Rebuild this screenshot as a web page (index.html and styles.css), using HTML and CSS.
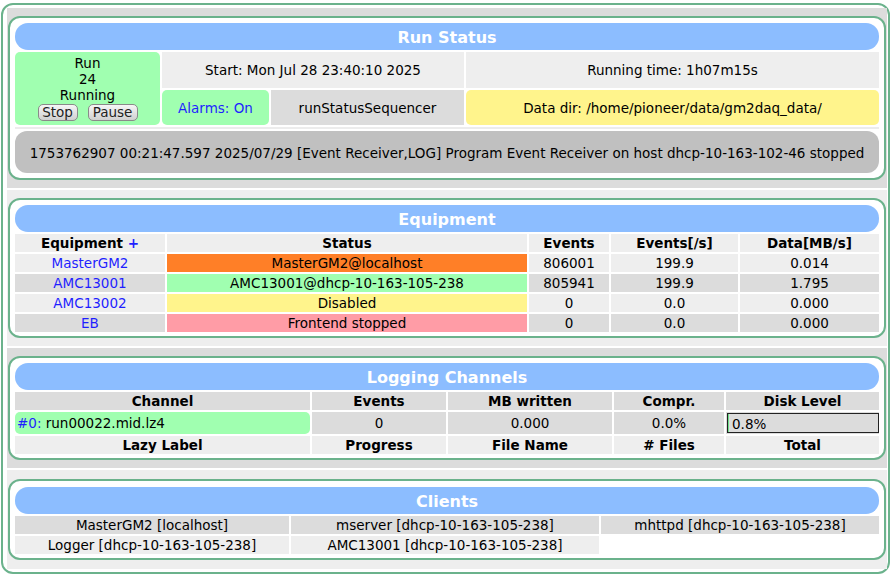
FILE: index.html
```html
<!DOCTYPE html>
<html>
<head>
<meta charset="utf-8">
<title>MIDAS Status</title>
<link rel="stylesheet" href="styles.css">
</head>
<body>
<div class="page">
  <div class="band dark">
    <div class="card card-run">
      <div class="card-head">Run Status</div>
      <div class="run-grid">
        <div class="cell green run-cell">
          <div>Run</div>
          <div>24</div>
          <div>Running</div>
          <div class="btns"><button class="btn">Stop</button><button class="btn">Pause</button></div>
        </div>
        <div class="cell light start">Start: Mon Jul 28 23:40:10 2025</div>
        <div class="cell light">Running time: 1h07m15s</div>
        <div class="cell green round link">Alarms: On</div>
        <div class="cell mid">runStatusSequencer</div>
        <div class="cell yellow round">Data dir: /home/pioneer/data/gm2daq_data/</div>
      </div>
      <div class="sep"></div>
      <div class="msg">1753762907 00:21:47.597 2025/07/29 [Event Receiver,LOG] Program Event Receiver on host dhcp-10-163-102-46 stopped</div>
    </div>
  </div>

  <div class="band light-band">
    <div class="card">
      <div class="card-head">Equipment</div>
      <div class="grid eq-grid">
        <div class="cell light bold"><span>Equipment <span class="link">+</span></span></div>
        <div class="cell light bold">Status</div>
        <div class="cell light bold">Events</div>
        <div class="cell light bold">Events[/s]</div>
        <div class="cell light bold">Data[MB/s]</div>

        <div class="cell light link">MasterGM2</div>
        <div class="cell orange">MasterGM2@localhost</div>
        <div class="cell light">806001</div>
        <div class="cell light">199.9</div>
        <div class="cell light">0.014</div>

        <div class="cell mid link">AMC13001</div>
        <div class="cell green">AMC13001@dhcp-10-163-105-238</div>
        <div class="cell mid">805941</div>
        <div class="cell mid">199.9</div>
        <div class="cell mid">1.795</div>

        <div class="cell light link">AMC13002</div>
        <div class="cell yellow">Disabled</div>
        <div class="cell light">0</div>
        <div class="cell light">0.0</div>
        <div class="cell light">0.000</div>

        <div class="cell mid link">EB</div>
        <div class="cell pink">Frontend stopped</div>
        <div class="cell mid">0</div>
        <div class="cell mid">0.0</div>
        <div class="cell mid">0.000</div>
      </div>
    </div>
  </div>

  <div class="band dark">
    <div class="card">
      <div class="card-head">Logging Channels</div>
      <div class="grid log-grid">
        <div class="cell mid bold">Channel</div>
        <div class="cell mid bold">Events</div>
        <div class="cell mid bold">MB written</div>
        <div class="cell mid bold">Compr.</div>
        <div class="cell mid bold">Disk Level</div>

        <div class="cell green round left tall"><span><span class="link">#0:</span> run00022.mid.lz4</span></div>
        <div class="cell mid tall">0</div>
        <div class="cell mid tall">0.000</div>
        <div class="cell mid tall">0.0%</div>
        <div class="cell mid tall disk-cell">
          <div class="disk"><div class="disk-fill" style="width:0.8%"></div><span class="disk-text">0.8%</span></div>
        </div>

        <div class="cell light bold">Lazy Label</div>
        <div class="cell light bold">Progress</div>
        <div class="cell light bold">File Name</div>
        <div class="cell light bold"># Files</div>
        <div class="cell light bold">Total</div>
      </div>
    </div>
  </div>

  <div class="band light-band last">
    <div class="card card-clients">
      <div class="card-head">Clients</div>
      <div class="grid cl-grid">
        <div class="cell mid">MasterGM2 [localhost]</div>
        <div class="cell mid">mserver [dhcp-10-163-105-238]</div>
        <div class="cell mid">mhttpd [dhcp-10-163-105-238]</div>
        <div class="cell light">Logger [dhcp-10-163-105-238]</div>
        <div class="cell light">AMC13001 [dhcp-10-163-105-238]</div>
        <div class="cell"></div>
      </div>
    </div>
  </div>
</div>
</body>
</html>
```

FILE: styles.css
```css
* { box-sizing: border-box; }

body {
  margin: 0;
  background: #fff;
  color: #000;
  font-family: "DejaVu Sans", Verdana, sans-serif;
  font-size: 13.5px;
}

.page {
  margin: 3px 1px 1px 1px;
  width: 889px;
  border: 2px solid #6bb28c;
  border-radius: 12px;
  padding: 3px 1px 3px 4px;
  display: flex;
  flex-direction: column;
  gap: 2px;
}

.band {
  padding: 8px 1px 8px 1px;
}
.band.dark { background: #dcdcdc; }
.band.light-band { background: #eeeeee; }
.band.last { padding: 9px 1px 9px 1px; }

.card {
  background: #fff;
  border: 2px solid #6bb28c;
  border-radius: 12px;
  padding: 5px 5px 4px 5px;
}
.card-run { padding-bottom: 5px; }
.card-clients { padding-top: 6px; }

.card-head {
  height: 27px;
  background: #8cbdff;
  border-radius: 13px;
  color: #fff;
  font-weight: bold;
  font-size: 16px;
  display: flex;
  align-items: center;
  justify-content: center;
  padding-top: 1px;
}

.cell {
  display: flex;
  align-items: center;
  justify-content: center;
  white-space: nowrap;
  height: 18px;
}
.light { background: #eeeeee; }
.mid { background: #dcdcdc; }
.green { background: #a0ffb0; }
.yellow { background: #fff48c; }
.orange { background: #ff7f27; }
.pink { background: #ff9ca6; }
.round { border-radius: 5px; }
.bold { font-weight: bold; }
.link { color: #1f1fff; }
.left { justify-content: flex-start; padding-left: 2px; }

/* Run status */
.run-grid {
  margin-top: 2px;
  display: grid;
  grid-template-columns: 145px 107px 1fr 413px;
  grid-template-rows: 36px 35px;
  gap: 2px;
}
.run-grid .cell { height: auto; }
.run-cell {
  grid-row: span 2;
  flex-direction: column;
  justify-content: flex-start;
  padding-top: 3px;
  line-height: 16px;
  border-radius: 5px;
}
.start { grid-column: span 2; }

.btns {
  display: flex;
  gap: 10px;
  margin-top: 1px;
}
.btn {
  font-family: "DejaVu Sans", Verdana, sans-serif;
  font-size: 13.5px;
  color: #222;
  height: 17px;
  padding: 0;
  line-height: 15px;
  border: 1px solid #8a8a8a;
  border-radius: 5px;
  background: linear-gradient(#f6f6f6, #d0d0d0);
}
.btn:first-child { width: 40px; }
.btn:last-child { width: 50px; }

.sep {
  height: 2px;
  margin: 2px 0;
  background: #ececec;
}

.msg {
  height: 42px;
  background: #c0c0c0;
  border-radius: 12px;
  display: flex;
  align-items: center;
  justify-content: center;
  white-space: nowrap;
  padding-top: 1px;
}

/* generic tables */
.grid {
  margin-top: 2px;
  display: grid;
  gap: 2px;
}
.eq-grid { grid-template-columns: 150px 360px 80px 127px 1fr; }
.log-grid { grid-template-columns: 295px 134px 164px 110px 1fr; }
.cl-grid { grid-template-columns: 274px 308px 1fr; }

.tall { height: 22px; }

.disk-cell {
  padding: 1px 0 1px 1px;
  justify-content: stretch;
}
.disk {
  position: relative;
  width: 100%;
  height: 20px;
  border: 1px solid #222;
  display: flex;
  align-items: center;
}
.disk-fill {
  position: absolute;
  left: 0;
  top: 0;
  bottom: 0;
  background: #6ee08a;
}
.disk-text {
  padding-left: 4px;
  padding-top: 2px;
  position: relative;
}
```
